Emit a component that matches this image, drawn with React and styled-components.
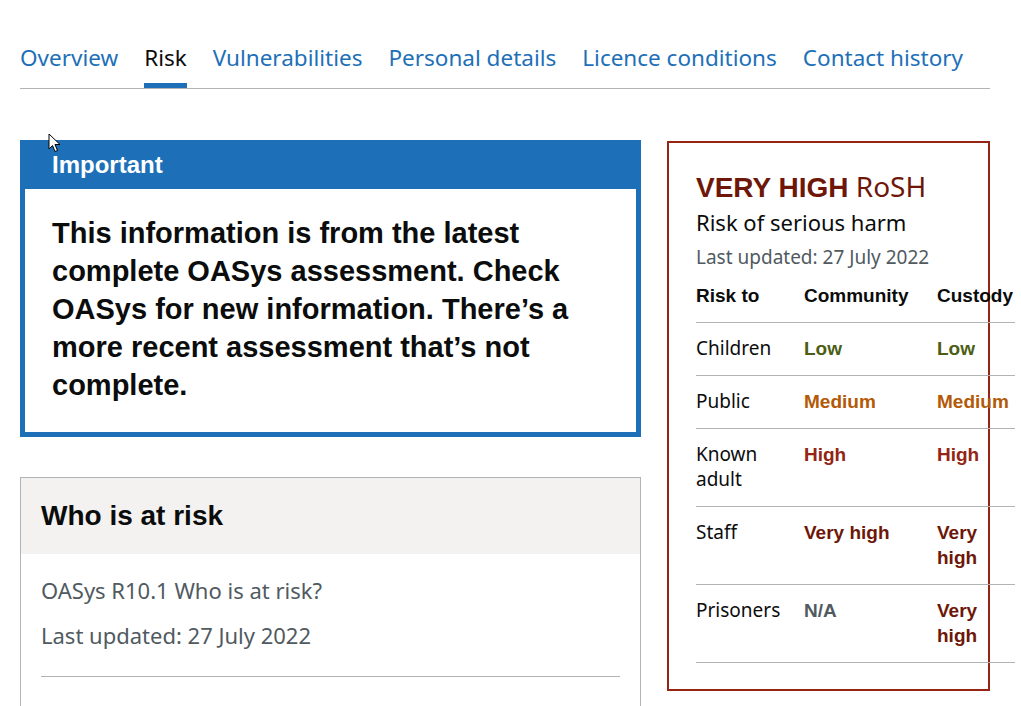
import React from 'react'
import styled, { createGlobalStyle, css } from 'styled-components'

const GlobalStyle = createGlobalStyle`
  body {
    margin: 0;
    background: #ffffff;
    color: #0b0c0c;
    font-family: "Noto Sans", "Liberation Sans", Arial, sans-serif;
  }
`

const Page = styled.div`
  position: relative;
  width: 970px;
  padding: 43px 20px 0;
`

const Tabs = styled.nav`
  display: flex;
  gap: 26px;
  border-bottom: 1px solid #b1b4b6;
`

const Tab = styled.a`
  display: block;
  padding-bottom: 10px;
  font-size: 22.5px;
  line-height: 30px;
  text-decoration: none;
  color: ${props => (props.$active ? '#0b0c0c' : '#1d70b8')};
  border-bottom: 5px solid ${props => (props.$active ? '#1d70b8' : 'transparent')};
`

const Columns = styled.div`
  display: grid;
  grid-template-columns: 621px 323px;
  column-gap: 26px;
  align-items: start;
  margin-top: 51px;
`

const Main = styled.div`
  display: flex;
  flex-direction: column;
  gap: 40px;
`

const Banner = styled.section`
  border: 5px solid #1d70b8;
  background: #1d70b8;
`

const BannerHeader = styled.h2`
  margin: 0;
  padding: 5px 27px 9px;
  font-family: "Liberation Sans", Arial, sans-serif;
  font-weight: 700;
  font-size: 24px;
  line-height: 30px;
  color: #ffffff;
`

const BannerBody = styled.div`
  background: #ffffff;
  padding: 25px 27px 28px;
`

const BannerText = styled.p`
  margin: 0;
  font-family: "Liberation Sans", Arial, sans-serif;
  font-weight: 700;
  font-size: 29px;
  line-height: 38px;
`

const Card = styled.section`
  border: 1px solid #b1b4b6;
`

const CardHeader = styled.h2`
  margin: 0;
  padding: 20px 20px 21px;
  background: #f3f2f1;
  font-family: "Liberation Sans", Arial, sans-serif;
  font-weight: 700;
  font-size: 28px;
  line-height: 35px;
`

const CardBody = styled.div`
  padding: 21px 20px 30px;
`

const Hint = styled.p`
  margin: 0 0 15px;
  font-size: 22px;
  line-height: 30px;
  color: #505a5f;
`

const Divider = styled.hr`
  margin: 26px 0 0;
  border: 0;
  border-top: 1px solid #b1b4b6;
`

const RiskCard = styled.aside`
  margin-top: 1px;
  border: 2px solid #942514;
  padding: 26px 27px 26px;
`

const RiskTitle = styled.h2`
  margin: 0 0 2px;
  font-size: 28px;
  line-height: 35px;
  font-weight: 400;
  color: #6e1709;
`

const RiskLevel = styled.strong`
  font-family: "Liberation Sans", Arial, sans-serif;
  font-weight: 700;
`

const RiskSubtitle = styled.p`
  margin: 0 0 8px;
  font-size: 22px;
  line-height: 30px;
`

const Updated = styled.p`
  margin: 0;
  font-size: 19px;
  line-height: 25px;
  color: #505a5f;
`

const Table = styled.table`
  width: 319px;
  table-layout: fixed;
  border-collapse: collapse;
  font-size: 19px;
  line-height: 25px;
`

const cell = css`
  padding: 13px 20px 14px 0;
  text-align: left;
  vertical-align: top;
  border-bottom: 1px solid #b1b4b6;

  &:last-child {
    padding-right: 0;
  }
`

const Th = styled.th`
  ${cell}
  font-family: "Liberation Sans", Arial, sans-serif;
  font-weight: 700;
`

const Td = styled.td`
  ${cell}
  font-weight: 400;
`

const levelColours = {
  low: '#4b5e13',
  medium: '#b35a08',
  high: '#942514',
  veryHigh: '#6e1709',
  na: '#505a5f',
}

const Level = styled.span`
  font-family: "Liberation Sans", Arial, sans-serif;
  font-weight: 700;
  color: ${props => levelColours[props.$level]};
`

const Pointer = styled.svg`
  position: absolute;
  left: 48px;
  top: 133px;
  width: 14px;
  height: 20px;
`

const tabs = ['Overview', 'Risk', 'Vulnerabilities', 'Personal details', 'Licence conditions', 'Contact history']

const labels = {
  low: 'Low',
  medium: 'Medium',
  high: 'High',
  veryHigh: 'Very high',
  na: 'N/A',
}

const risks = [
  { who: 'Children', community: 'low', custody: 'low' },
  { who: 'Public', community: 'medium', custody: 'medium' },
  { who: 'Known adult', community: 'high', custody: 'high' },
  { who: 'Staff', community: 'veryHigh', custody: 'veryHigh' },
  { who: 'Prisoners', community: 'na', custody: 'veryHigh' },
]

const App = () => {
  return (
    <Page>
      <GlobalStyle />
      <Tabs>
        {tabs.map(tab => (
          <Tab key={tab} href="#" $active={tab === 'Risk'}>{tab}</Tab>
        ))}
      </Tabs>

      <Columns>
        <Main>
          <Banner>
            <BannerHeader>Important</BannerHeader>
            <BannerBody>
              <BannerText>
                This information is from the latest complete OASys assessment. Check OASys for new information. There’s a more recent assessment that’s not complete.
              </BannerText>
            </BannerBody>
          </Banner>

          <Card>
            <CardHeader>Who is at risk</CardHeader>
            <CardBody>
              <Hint>OASys R10.1 Who is at risk?</Hint>
              <Hint>Last updated: 27 July 2022</Hint>
              <Divider />
            </CardBody>
          </Card>
        </Main>

        <RiskCard>
          <RiskTitle><RiskLevel>VERY HIGH</RiskLevel> RoSH</RiskTitle>
          <RiskSubtitle>Risk of serious harm</RiskSubtitle>
          <Updated>Last updated: 27 July 2022</Updated>
          <Table>
            <colgroup>
              <col style={{ width: '108px' }} />
              <col style={{ width: '133px' }} />
              <col style={{ width: '78px' }} />
            </colgroup>
            <thead>
              <tr>
                <Th>Risk to</Th>
                <Th>Community</Th>
                <Th>Custody</Th>
              </tr>
            </thead>
            <tbody>
              {risks.map(row => (
                <tr key={row.who}>
                  <Td>{row.who}</Td>
                  <Td><Level $level={row.community}>{labels[row.community]}</Level></Td>
                  <Td><Level $level={row.custody}>{labels[row.custody]}</Level></Td>
                </tr>
              ))}
            </tbody>
          </Table>
        </RiskCard>
      </Columns>

      <Pointer viewBox="0 0 14 20">
        <path d="M1 1 L1 16 L4.5 12.5 L7 18.5 L9.5 17.5 L7 11.5 L12 11.5 Z" fill="#ffffff" stroke="#000000" strokeWidth="1" strokeLinejoin="round" />
      </Pointer>
    </Page>
  )
}

export default App
